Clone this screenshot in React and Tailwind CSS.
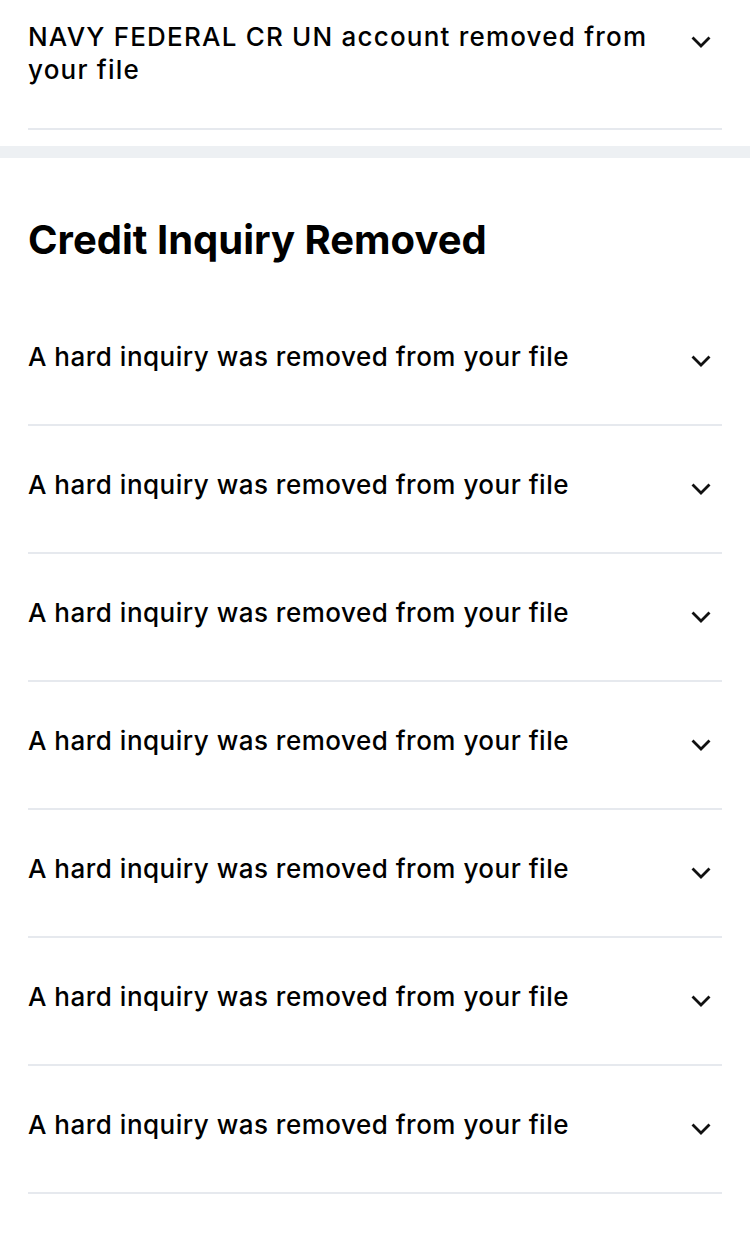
import React from 'react';

const font = { fontFamily: 'Inter, "Noto Sans", sans-serif' };

const Chevron = () => (
  <svg width="22" height="14" viewBox="0 0 22 14" fill="none" className="shrink-0">
    <path d="M3.5 3.5l7.5 7.5 7.5-7.5" stroke="#111" strokeWidth="2.8" strokeLinecap="square" />
  </svg>
);

const Row = ({ text, top = 'pt-[42px]', bottom = 'pb-[51px]', icon = 'pt-[14px]', track = 'tracking-[0.5px]' }) => (
  <div className={`flex items-start justify-between border-b-2 border-[#e6e9ee] ${top} ${bottom}`}>
    <p className={`text-[26px] leading-[33px] font-medium text-black max-w-[640px] ${track}`}>{text}</p>
    <div className={`${icon} pr-[10px]`}>
      <Chevron />
    </div>
  </div>
);

export default function App() {
  const inquiries = Array.from({ length: 7 });

  return (
    <div className="w-[750px] min-h-[1234px] bg-white" style={font}>
      <div className="px-[28px] pb-[16px]">
        <Row
          text="NAVY FEDERAL CR UN account removed from your file"
          top="pt-[20px]"
          bottom="pb-[42px]"
          icon="pt-[15px]"
          track="tracking-[1.2px]"
        />
      </div>

      <div className="h-[12px] bg-[#edf0f3]" />

      <div className="px-[28px]">
        <h2 className="pt-[59px] pb-[35px] text-[40px] leading-[46px] font-bold text-black">
          Credit Inquiry Removed
        </h2>
        {inquiries.map((_, i) => (
          <Row key={i} text="A hard inquiry was removed from your file" />
        ))}
      </div>
    </div>
  );
}
